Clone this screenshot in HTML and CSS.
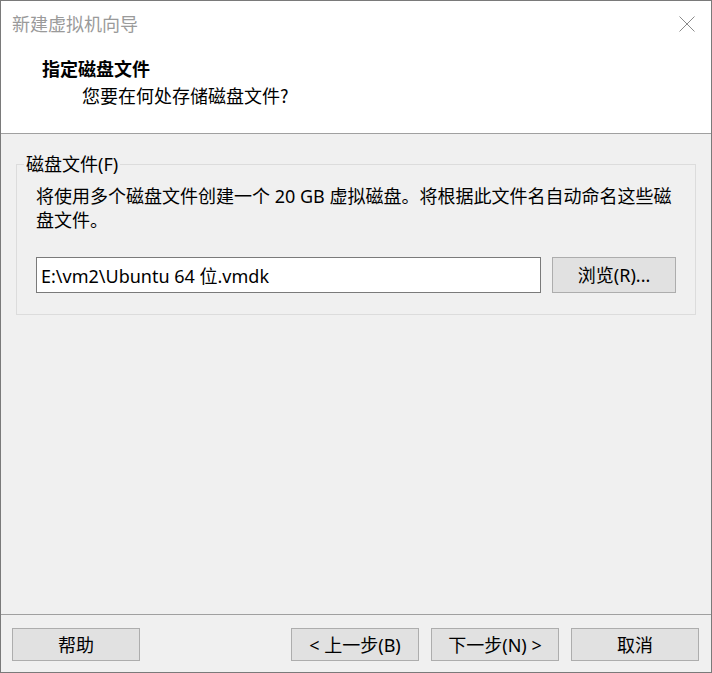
FILE: index.html
```html
<!DOCTYPE html>
<html lang="zh-CN">
<head>
<meta charset="UTF-8">
<meta name="viewport" content="width=device-width, initial-scale=1.0">
<title>新建虚拟机向导</title>
<link rel="stylesheet" href="styles.css">
</head>
<body>
<div class="window">
    <div class="top">
        <div class="titlebar">
            <span class="title">新建虚拟机向导</span>
            <svg class="close" width="16" height="16" viewBox="0 0 16 16">
                <path d="M0.5 0.5 L15.5 15.5 M15.5 0.5 L0.5 15.5" stroke="#8a8a8a" stroke-width="1" fill="none"/>
            </svg>
        </div>
        <div class="header">
            <div class="heading">指定磁盘文件</div>
            <div class="subheading">您要在何处存储磁盘文件?</div>
        </div>
    </div>

    <div class="content">
        <div class="group">
            <div class="group-label">磁盘文件(F)</div>
            <p class="desc">将使用多个磁盘文件创建一个 20 GB 虚拟磁盘。将根据此文件名自动命名这些磁<br>盘文件。</p>
            <div class="file-row">
                <input class="path" type="text" value="E:\vm2\Ubuntu 64 位.vmdk">
                <button class="btn browse">浏览(R)...</button>
            </div>
        </div>
    </div>

    <div class="footer">
        <button class="btn">帮助</button>
        <div class="spacer"></div>
        <button class="btn">&lt; 上一步(B)</button>
        <button class="btn">下一步(N) &gt;</button>
        <button class="btn">取消</button>
    </div>
</div>
</body>
</html>
```

FILE: styles.css
```css
/* Basic styling */
body {
    margin: 0;
    padding: 0;
    background-color: #f0f0f0;
    font-family: "Noto Sans", "Noto Sans CJK SC", sans-serif;
    font-size: 18px;
    color: #000;
}
.window {
    width: 712px;
    height: 673px;
    box-sizing: border-box;
    border: 1px solid #7a7a7a;
    display: flex;
    flex-direction: column;
    background-color: #f0f0f0;
}

/* title bar + header (white part) */
.top {
    height: 132px;
    background-color: #fff;
    border-bottom: 1px solid #a0a0a0;
}
.titlebar {
    height: 44px;
    display: flex;
    align-items: center;
    justify-content: space-between;
    padding: 0 16px 0 11px;
}
.title {
    color: #9a9a9a;
    line-height: 24px;
    font-family: "Noto Sans CJK SC", sans-serif;
}
.close {
    margin-top: 1px;
}
.header {
    padding: 11px 0 0 41px;
}
.heading {
    font-family: "Noto Sans CJK SC", sans-serif;
    font-weight: bold;
    line-height: 24px;
}
.subheading {
    font-family: "Noto Sans CJK SC", sans-serif;
    line-height: 24px;
    margin-top: 3px;
    padding-left: 40px;
}

/* main area */
.content {
    flex: 1;
    padding: 30px 15px 0;
}
.group {
    border: 1px solid #dcdcdc;
    padding: 0 19px 21px;
}
.group-label {
    width: fit-content;
    margin: -13px 0 0 -12px;
    padding: 0 2px;
    background-color: #f0f0f0;
    line-height: 24px;
}
.desc {
    margin: 8px 0 0;
    line-height: 24px;
}
.file-row {
    display: flex;
    gap: 11px;
    margin-top: 25px;
}
.path {
    width: 506px;
    height: 36px;
    box-sizing: border-box;
    border: 1px solid #7a7a7a;
    background-color: #fff;
    padding: 0 4px;
    font-family: inherit;
    font-size: 18px;
    color: #000;
    outline: none;
}
.btn {
    width: 128px;
    height: 33px;
    box-sizing: border-box;
    border: 1px solid #adadad;
    background-color: #e1e1e1;
    font-family: inherit;
    font-size: 18px;
    color: #000;
    padding: 0;
    line-height: 24px;
}
.browse {
    width: 124px;
    height: 36px;
}

/* bottom buttons */
.footer {
    height: 58px;
    box-sizing: border-box;
    border-top: 1px solid #a0a0a0;
    display: flex;
    gap: 12px;
    padding: 13px 12px 0 11px;
}
.spacer {
    flex: 1;
}
```
